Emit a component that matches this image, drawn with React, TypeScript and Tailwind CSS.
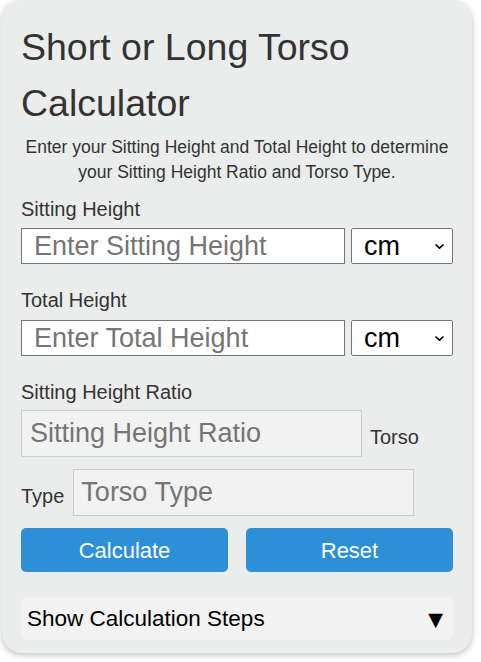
import React from "react";

export default function App() {
  const font = { fontFamily: '"Liberation Sans", Arial, sans-serif' };
  return (
    <div className="min-h-[662px] bg-white" style={font}>
      <div className="ml-[2px] w-[470px] h-[653px] rounded-[20px] bg-[#ebeded] px-[19px] pt-[19px] shadow-[0_2px_6px_rgba(0,0,0,0.25)]">
        <h1 className="text-[37.5px] leading-[56px] text-[#333] font-normal whitespace-nowrap">
          Short or Long Torso
          <br />
          Calculator
        </h1>
        <p className="mt-[4px] text-center text-[17.5px] leading-[25px] text-[#333]">
          Enter your Sitting Height and Total Height to determine your Sitting Height Ratio and Torso Type.
        </p>

        <div className="mt-[12px] text-[20px] leading-[24px] text-[#333]">Sitting Height</div>
        <div className="mt-[7px] flex gap-[6px]">
          <input
            className="w-[324px] h-[36px] border border-[#767676] bg-white px-[12px] text-[27px] text-black placeholder:text-[#757575] outline-none"
            placeholder="Enter Sitting Height"
          />
          <div className="relative w-[102px] h-[36px] border border-[#767676] bg-white rounded-[2px]">
            <span className="absolute left-[12px] top-[1px] text-[27px] leading-[32px] text-black">cm</span>
            <svg className="absolute right-[7px] top-[14px]" width="11" height="7" viewBox="0 0 11 7">
              <path d="M1.5 1.5 L5.5 5.2 L9.5 1.5" stroke="#000" strokeWidth="1.7" fill="none" />
            </svg>
          </div>
        </div>

        <div className="mt-[24px] text-[20px] leading-[24px] text-[#333]">Total Height</div>
        <div className="mt-[8px] flex gap-[6px]">
          <input
            className="w-[324px] h-[36px] border border-[#767676] bg-white px-[12px] text-[27px] text-black placeholder:text-[#757575] outline-none"
            placeholder="Enter Total Height"
          />
          <div className="relative w-[102px] h-[36px] border border-[#767676] bg-white rounded-[2px]">
            <span className="absolute left-[12px] top-[1px] text-[27px] leading-[32px] text-black">cm</span>
            <svg className="absolute right-[7px] top-[14px]" width="11" height="7" viewBox="0 0 11 7">
              <path d="M1.5 1.5 L5.5 5.2 L9.5 1.5" stroke="#000" strokeWidth="1.7" fill="none" />
            </svg>
          </div>
        </div>

        <div className="mt-[24px] text-[20px] leading-[24px] text-[#333]">Sitting Height Ratio</div>
        <div className="mt-[6px] flex items-center gap-[8px]">
          <input
            readOnly
            className="w-[341px] h-[47px] border border-[#cccccc] bg-[#f2f2f2] px-[8px] text-[27px] placeholder:text-[#757575] outline-none"
            placeholder="Sitting Height Ratio"
          />
          <span className="mt-[6px] text-[20px] leading-[24px] text-[#333]">Torso</span>
        </div>
        <div className="mt-[12px] flex items-center gap-[9px]">
          <span className="mt-[6px] text-[20px] leading-[24px] text-[#333]">Type</span>
          <input
            readOnly
            className="w-[341px] h-[47px] border border-[#cccccc] bg-[#f2f2f2] px-[7px] text-[27px] placeholder:text-[#757575] outline-none"
            placeholder="Torso Type"
          />
        </div>

        <div className="mt-[12px] flex gap-[18px]">
          <button className="w-[207px] h-[44px] rounded-[5px] bg-[#2d8fd6] text-white text-[22px]">
            Calculate
          </button>
          <button className="w-[207px] h-[44px] rounded-[5px] bg-[#2d8fd6] text-white text-[22px]">
            Reset
          </button>
        </div>

        <div className="mt-[25px] h-[43px] rounded-[6px] bg-[#f2f2f2] flex items-center justify-between pl-[6px] pr-[5px]">
          <span className="text-[22.5px] text-black">Show Calculation Steps</span>
          <span className="text-[25px] leading-[28px] text-black">▼</span>
        </div>
      </div>
    </div>
  );
}
